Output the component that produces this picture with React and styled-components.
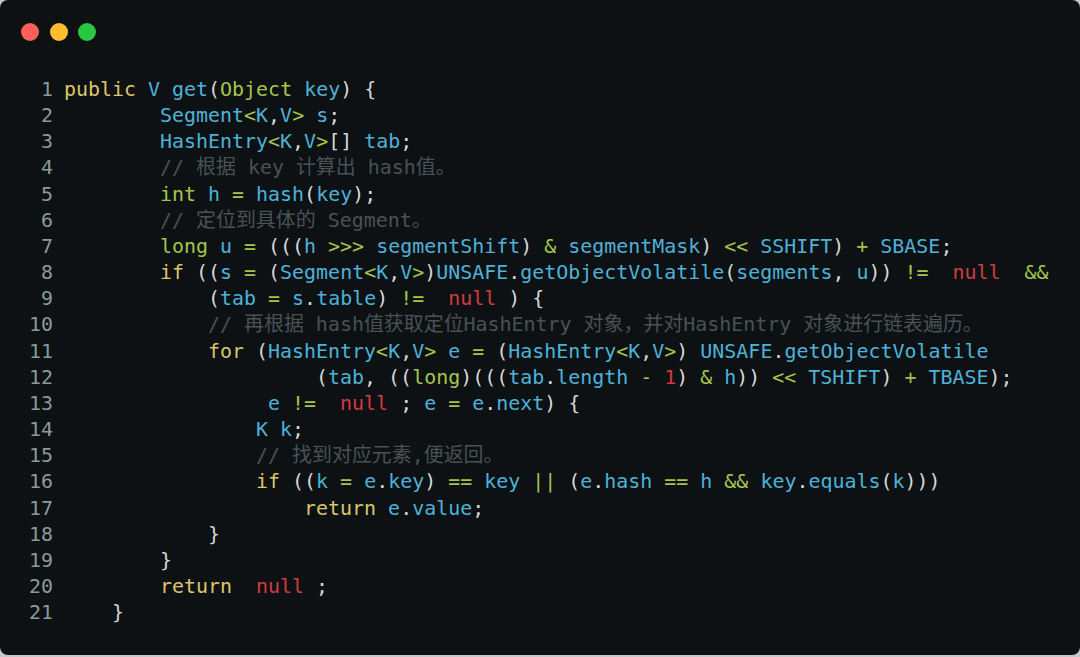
import React from 'react';
import styled, { createGlobalStyle } from 'styled-components';

const GlobalStyle = createGlobalStyle`
  html, body {
    margin: 0;
    padding: 0;
    background: #c4c8cb;
  }
  #root {
    width: 1080px;
    height: 657px;
  }
`;

const colors = {
  k: '#dcc66c',
  t: '#a4c54e',
  b: '#4eb2d9',
  o: '#a4c54e',
  p: '#d6d6d6',
  n: '#d23b41',
  c: '#485156',
};

const Window = styled.div`
  width: 1080px;
  height: 655px;
  background: #0d1113;
  border-radius: 8px;
  overflow: hidden;
  display: flex;
  flex-direction: column;
`;

const TitleBar = styled.div`
  display: flex;
  align-items: center;
  gap: 10.5px;
  padding: 23px 0 0 21px;
  height: 18px;
`;

const Dot = styled.span`
  width: 18px;
  height: 18px;
  border-radius: 50%;
  background: ${({ $color }) => $color};
`;

const Code = styled.div`
  margin-top: 35px;
  display: flex;
  flex-direction: column;
  font-family: 'DejaVu Sans Mono', 'Noto Sans CJK SC', monospace;
  font-size: 19.94px;
  line-height: 26.15px;
`;

const Row = styled.div`
  display: flex;
  white-space: pre;
  padding-left: 29px;
`;

const LineNo = styled.span`
  width: 24px;
  margin-right: 11px;
  text-align: right;
  color: #8a9b99;
`;

const Tok = styled.span`
  color: ${({ $kind }) => colors[$kind] || colors.p};
`;

const sp = n => ['p', ' '.repeat(n)];

const lines = [
  [['k', 'public'], ['p', ' '], ['b', 'V'], ['p', ' '], ['b', 'get'], ['p', '('], ['t', 'Object'], ['p', ' '], ['b', 'key'], ['p', ') {']],
  [sp(8), ['b', 'Segment'], ['o', '<'], ['b', 'K'], ['p', ','], ['b', 'V'], ['o', '>'], ['b', ' s'], ['p', ';']],
  [sp(8), ['b', 'HashEntry'], ['o', '<'], ['b', 'K'], ['p', ','], ['b', 'V'], ['o', '>'], ['p', '[]'], ['b', ' tab'], ['p', ';']],
  [sp(8), ['c', '// 根据 key 计算出 hash值。']],
  [sp(8), ['t', 'int'], ['b', ' h '], ['o', '='], ['b', ' hash'], ['p', '('], ['b', 'key'], ['p', ');']],
  [sp(8), ['c', '// 定位到具体的 Segment。']],
  [sp(8), ['t', 'long'], ['b', ' u '], ['o', '='], ['p', ' ((('], ['b', 'h '], ['o', '>>>'], ['b', ' segmentShift'], ['p', ') '], ['o', '&'], ['b', ' segmentMask'], ['p', ') '], ['o', '<<'], ['b', ' SSHIFT'], ['p', ') '], ['o', '+'], ['b', ' SBASE'], ['p', ';']],
  [sp(8), ['k', 'if'], ['p', ' (('], ['b', 's '], ['o', '='], ['p', ' ('], ['b', 'Segment'], ['o', '<'], ['b', 'K'], ['p', ','], ['b', 'V'], ['o', '>'], ['p', ')'], ['b', 'UNSAFE'], ['p', '.'], ['b', 'getObjectVolatile'], ['p', '('], ['b', 'segments'], ['p', ', '], ['b', 'u'], ['p', ')) '], ['o', '!='], ['p', '  '], ['n', 'null'], ['p', '  '], ['o', '&&']],
  [sp(12), ['p', '('], ['b', 'tab '], ['o', '='], ['b', ' s'], ['p', '.'], ['b', 'table'], ['p', ') '], ['o', '!='], ['p', '  '], ['n', 'null'], ['p', ' ) {']],
  [sp(12), ['c', '// 再根据 hash值获取定位HashEntry 对象，并对HashEntry 对象进行链表遍历。']],
  [sp(12), ['k', 'for'], ['p', ' ('], ['b', 'HashEntry'], ['o', '<'], ['b', 'K'], ['p', ','], ['b', 'V'], ['o', '>'], ['b', ' e '], ['o', '='], ['p', ' ('], ['b', 'HashEntry'], ['o', '<'], ['b', 'K'], ['p', ','], ['b', 'V'], ['o', '>'], ['p', ') '], ['b', 'UNSAFE'], ['p', '.'], ['b', 'getObjectVolatile']],
  [sp(21), ['p', '('], ['b', 'tab'], ['p', ', (('], ['t', 'long'], ['p', ')((('], ['b', 'tab'], ['p', '.'], ['b', 'length '], ['o', '-'], ['p', ' '], ['n', '1'], ['p', ') '], ['o', '&'], ['b', ' h'], ['p', ')) '], ['o', '<<'], ['b', ' TSHIFT'], ['p', ') '], ['o', '+'], ['b', ' TBASE'], ['p', ');']],
  [sp(17), ['b', 'e '], ['o', '!='], ['p', '  '], ['n', 'null'], ['p', ' ; '], ['b', 'e '], ['o', '='], ['b', ' e'], ['p', '.'], ['b', 'next'], ['p', ') {']],
  [sp(16), ['b', 'K k'], ['p', ';']],
  [sp(16), ['c', '// 找到对应元素,便返回。']],
  [sp(16), ['k', 'if'], ['p', ' (('], ['b', 'k '], ['o', '='], ['b', ' e'], ['p', '.'], ['b', 'key'], ['p', ') '], ['o', '=='], ['b', ' key '], ['o', '||'], ['p', ' ('], ['b', 'e'], ['p', '.'], ['b', 'hash '], ['o', '=='], ['b', ' h '], ['o', '&&'], ['b', ' key'], ['p', '.'], ['b', 'equals'], ['p', '('], ['b', 'k'], ['p', ')))']],
  [sp(20), ['k', 'return'], ['b', ' e'], ['p', '.'], ['b', 'value'], ['p', ';']],
  [sp(12), ['p', '}']],
  [sp(8), ['p', '}']],
  [sp(8), ['k', 'return'], ['p', '  '], ['n', 'null'], ['p', ' ;']],
  [sp(4), ['p', '}']],
];

const App = () => (
  <>
    <GlobalStyle />
    <Window>
      <TitleBar>
        <Dot $color="#fe5f57" />
        <Dot $color="#febc2e" />
        <Dot $color="#28c840" />
      </TitleBar>
      <Code>
        {lines.map((toks, i) => (
          <Row key={i}>
            <LineNo>{i + 1}</LineNo>
            {toks.map(([kind, text], j) => (
              <Tok key={j} $kind={kind}>{text}</Tok>
            ))}
          </Row>
        ))}
      </Code>
    </Window>
  </>
);

export default App;
